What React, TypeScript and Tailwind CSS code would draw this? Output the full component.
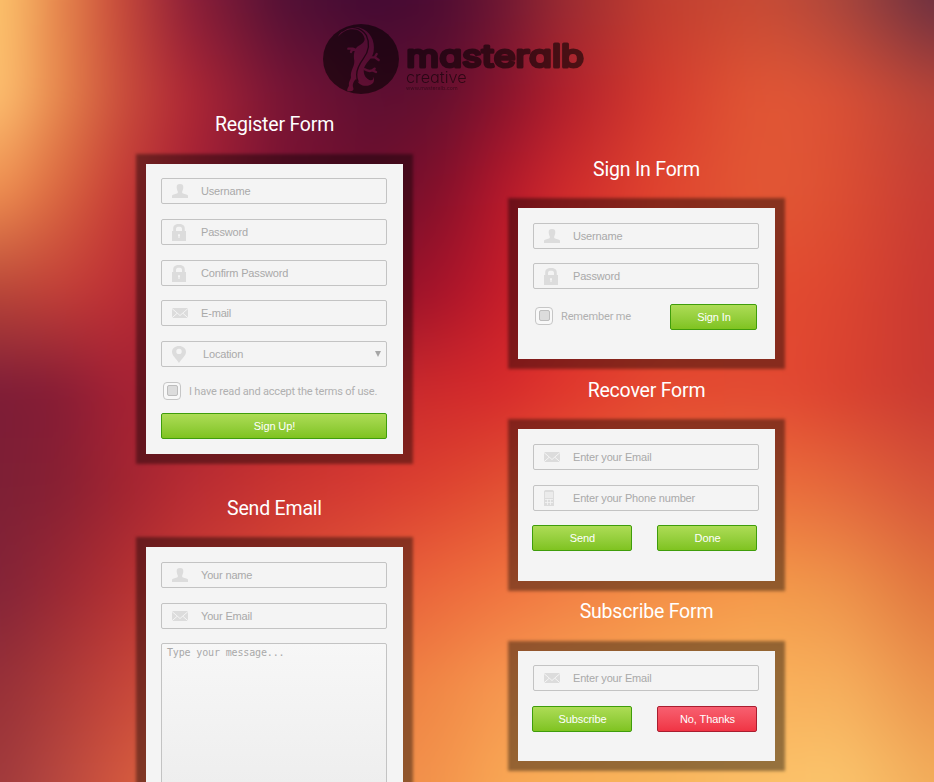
import type { ReactNode } from "react";

/* ---------- Backdrop: a colour mesh blended row by row, then softened ---------- */

const bleed = 60;

const meshX = [0, 60, 120, 187, 280, 374, 440, 500, 560, 654, 747, 790, 840, 934];

const meshRows: { y: number; colors: string[] }[] = [
  { y: 0, colors: ["#fdc46c", "#e6864c", "#c84a3a", "#8e1f38", "#531135", "#420a33", "#4d0c33", "#6c1733", "#972a32", "#c03e30", "#c84a34", "#c04a38", "#aa463c", "#6b3040"] },
  { y: 98, colors: ["#fdc070", "#e6864c", "#cb4f3c", "#b02835", "#7a1535", "#5e0f32", "#66102f", "#88132d", "#b01e2c", "#d43a2e", "#e05434", "#e05636", "#da5036", "#b84438"] },
  { y: 195, colors: ["#ee8e50", "#d96640", "#c63c36", "#a82136", "#7a1232", "#6e0f2d", "#86102b", "#b3182b", "#cf2a2c", "#e0442f", "#e25634", "#e15634", "#dc4e33", "#c63c34"] },
  { y: 293, colors: ["#b84538", "#c23f38", "#bd2f35", "#a01f35", "#86152f", "#90122b", "#a8142a", "#c41c2a", "#d72c2c", "#e0402e", "#e24a30", "#e24a30", "#dc4630", "#c83832"] },
  { y: 391, colors: ["#7d1c37", "#861c35", "#a42134", "#a82433", "#b8262e", "#c52a2e", "#cf2a2c", "#d62b2c", "#e0362d", "#e44830", "#e24a32", "#e24832", "#da4230", "#c83a32"] },
  { y: 489, colors: ["#7d2035", "#882033", "#a02431", "#b82c33", "#cb3531", "#d83c32", "#de4430", "#e25033", "#e65c38", "#ea6a39", "#ec703c", "#ea6e3c", "#e4683c", "#d6543a"] },
  { y: 586, colors: ["#832438", "#9a2834", "#b23033", "#c83c34", "#d84c35", "#e45c3a", "#ec683c", "#f0733f", "#f27e44", "#f48e46", "#f4984a", "#f2984a", "#ee924a", "#e0743e"] },
  { y: 684, colors: ["#963038", "#ac3a38", "#c4443a", "#d3543a", "#e26a3e", "#ee7c42", "#f18846", "#f69650", "#f79e52", "#f8a856", "#f9b05a", "#f9b05b", "#f6ae5c", "#ea924c"] },
  { y: 782, colors: ["#a03a3c", "#b84840", "#d2573e", "#de6c42", "#e87e46", "#ef8c4a", "#f3944c", "#f8a654", "#f8ae58", "#f8b55c", "#fabd66", "#fbc26a", "#fac46c", "#f2ac5a"] },
];

function Backdrop() {
  return (
    <div className="absolute -inset-[60px] -z-10 blur-[18px]">
      {meshRows.map((row, i) => {
        const stops = row.colors.map((c, j) => `${c} ${meshX[j] + bleed}px`).join(", ");
        const fade =
          i === 0
            ? undefined
            : `linear-gradient(to bottom, transparent ${meshRows[i - 1].y + bleed}px, black ${row.y + bleed}px)`;
        return (
          <div
            key={row.y}
            className="absolute inset-0"
            style={{ backgroundImage: `linear-gradient(to right, ${stops})`, maskImage: fade }}
          />
        );
      })}
    </div>
  );
}

/* ---------- Logo ---------- */

function Logo() {
  return (
    <svg viewBox="0 0 870 285" className="ml-[310px] block h-[95px] w-[290px]" fill="#000" opacity="0.56">
      <mask id="gecko">
        <rect width="870" height="285" fill="#fff" />
        <path
          d="M84 80C94 58 126 46 150 53C180 62 196 92 191 124C188 146 170 154 163 172C158 188 164 204 178 210C188 214 192 206 188 200C196 208 192 220 180 225C162 232 144 224 139 206C130 214 126 224 130 234C132 242 126 245 112 243C110 236 116 232 117 226C115 216 122 210 123 202C120 182 134 170 133 152C130 136 132 120 142 110C154 102 164 98 164 86C160 68 144 58 128 58C110 58 98 66 84 80Z"
          fill="#000"
        />
        <g fill="none" stroke="#000" strokeLinecap="round" strokeLinejoin="round">
          <path d="M142 122L128 116L115 116M127 117L123 126" strokeWidth="7" />
          <path d="M182 142L194 142L206 150M194 142L200 132" strokeWidth="7" />
          <path d="M164 178C174 184 186 184 194 176M188 181L198 186" strokeWidth="7" />
        </g>
        <path
          d="M98 63C122 44 154 52 169 76C182 104 174 128 160 146C147 164 140 178 140 194C140 204 142 210 144 214"
          fill="none"
          stroke="#fff"
          strokeWidth="4"
          strokeLinecap="round"
        />
      </mask>
      <ellipse cx="153" cy="147" rx="114" ry="105" mask="url(#gecko)" />
      <text
        x="289"
        y="172"
        textLength="533"
        lengthAdjust="spacingAndGlyphs"
        stroke="#000"
        strokeWidth="9"
        strokeLinejoin="round"
        strokeLinecap="round"
        className="font-['Inter',sans-serif] text-[94px] font-normal [font-feature-settings:'cv11','ss01']"
      >
        masteralb
      </text>
      <text
        x="288"
        y="219"
        textLength="182"
        lengthAdjust="spacingAndGlyphs"
        className="font-['Inter',sans-serif] text-[46px] font-light [font-feature-settings:'cv11']"
      >
        creative
      </text>
      <text x="288" y="241" textLength="155" lengthAdjust="spacingAndGlyphs" opacity=".75" className="font-['Inter',sans-serif] text-[15px]">
        www.masteralb.com
      </text>
    </svg>
  );
}

/* ---------- Field icons ---------- */

function UserIcon() {
  return (
    <svg viewBox="0 0 16 14" className="h-[14px] w-4" fill="#dcdcdc">
      <path d="M8 0C10.400 0 11.400 1 11.300 3.400C11.200 5.600 10.400 6.600 10.200 7.600V9C12 10 15.200 10.200 16 11.600V14H0V11.600C.8 10.200 4 10 5.800 9V7.600C5.600 6.600 4.800 5.600 4.700 3.400C4.600 1 5.600 0 8 0Z" />
    </svg>
  );
}

function LockIcon() {
  return (
    <svg viewBox="0 0 14 17" className="h-[17px] w-[14px]" fill="#dcdcdc">
      <path
        fillRule="evenodd"
        d="M0 7H1.200V4.600C1.200 1.600 3 0 7 0S12.800 1.600 12.800 4.600V7H14V17H0ZM4 7H10V5C10 3.400 9 2.800 7 2.800S4 3.400 4 5ZM6 10.200V11.800L6.400 12.200V14H7.600V12.200L8 11.800V10.200Z"
      />
    </svg>
  );
}

function MailIcon() {
  return (
    <svg viewBox="0 0 16 10" className="h-[10px] w-4">
      <rect width="16" height="10" fill="#dcdcdc" />
      <path d="M0 .5L8 7.500L16 .5M0 9.800L5 5.400M16 9.800L11 5.400" fill="none" stroke="#f4f4f4" strokeWidth="1" />
    </svg>
  );
}

function PinIcon() {
  return (
    <svg viewBox="0 0 14 17" className="h-[17px] w-[14px]" fill="#dcdcdc">
      <path
        fillRule="evenodd"
        d="M7 0C11 0 14 2.400 14 6C14 9.500 9.500 13 7 17C4.500 13 0 9.500 0 6C0 2.400 3 0 7 0ZM7 2.700A2.700 2.700 0 1 0 7 8.100A2.700 2.700 0 1 0 7 2.700Z"
      />
    </svg>
  );
}

function PhoneIcon() {
  return (
    <svg viewBox="0 0 10 16" className="h-4 w-[10px]">
      <path d="M1.500 0H8.500L10 1V16H0V1Z" fill="#dcdcdc" />
      <rect x="1" y="2" width="8" height="6" fill="#ebebeb" />
      <path d="M1 9.500H9M1 12.500H9M3.500 9V15M6.500 9V15" stroke="#f4f4f4" strokeWidth=".8" />
    </svg>
  );
}

/* ---------- Form parts ---------- */

function Field({ icon, text, className = "", children }: { icon: ReactNode; text: string; className?: string; children?: ReactNode }) {
  return (
    <div className={`flex h-[26px] w-[226px] items-center rounded-[2px] border border-[#c3c3c3] pl-[10px] ${className}`}>
      <span className="flex w-[29px] items-center">{icon}</span>
      <span className="flex-1 text-[11px] leading-none tracking-[-0.17px] text-[#a9a9a9]">{text}</span>
      {children}
    </div>
  );
}

function Button({ text, tone = "green", className = "" }: { text: string; tone?: "green" | "red"; className?: string }) {
  const look =
    tone === "green"
      ? "border-[#3f9d0b] from-[#addc55] to-[#7fc31f]"
      : "border-[#a91d2f] from-[#f75f70] to-[#f03344]";
  return (
    <button
      className={`flex h-[26px] items-center justify-center rounded-[2px] border bg-linear-to-b pl-px text-[11px] leading-none tracking-[-0.1px] text-white ${look} ${className}`}
    >
      {text}
    </button>
  );
}

function Check({ text, spacing }: { text: string; spacing: string }) {
  return (
    <label className="flex h-[18px] items-center pl-[2px]">
      <span className="flex h-[18px] w-[18px] items-start rounded-[4px] border border-[#c6c6c6] bg-[#f8f8f8] pt-[2px] pl-[3px]">
        <span className="h-[11px] w-[11px] rounded-[2px] border border-[#bdbdbd] bg-[#dcdcdc]" />
      </span>
      <span className={`ml-2 whitespace-nowrap font-['Roboto',sans-serif] text-[11px] leading-none text-[#b0b0b0] ${spacing}`}>{text}</span>
    </label>
  );
}

function Title({ text }: { text: string }) {
  return (
    <h2 className="h-[30px] pt-px text-center font-['Roboto',sans-serif] text-[19.5px] leading-[30px] tracking-[-0.2px] text-white">{text}</h2>
  );
}

function Card({ className = "", children }: { className?: string; children: ReactNode }) {
  return (
    <section className={`w-[257px] bg-[#f4f4f4] px-[15px] shadow-[0_0_3px_10px_rgba(0,0,0,0.4)] ${className}`}>{children}</section>
  );
}

export default function App() {
  return (
    <div className="relative isolate h-[782px] w-[934px] overflow-hidden pt-[10px] font-['Liberation_Sans',Arial,sans-serif]">
      <Backdrop />
      <Logo />
      <main className="flex gap-[115px] pl-[146px]">
        <div className="w-[257px] pt-1">
          <Title text="Register Form" />
          <Card className="mt-[25px] h-[290px] pt-[14px]">
            <Field icon={<UserIcon />} text="Username" />
            <Field icon={<LockIcon />} text="Password" className="mt-[15px]" />
            <Field icon={<LockIcon />} text="Confirm Password" className="mt-[15px]" />
            <Field icon={<MailIcon />} text="E-mail" className="mt-[14px]" />
            <Field icon={<PinIcon />} text="Location" className="mt-[15px] [&>span:nth-child(2)]:pl-[2px]">
              <span className="mr-[5px] h-0 w-0 border-x-[3px] border-t-[6px] border-x-transparent border-t-[#a6a6a6]" />
            </Field>
            <div className="mt-[15px]">
              <Check text="I have read and accept the terms of use." spacing="tracking-[-0.18px]" />
            </div>
            <Button text="Sign Up!" className="mt-[13px] w-[226px]" />
          </Card>

          <div className="mt-[39px]">
            <Title text="Send Email" />
          </div>
          <Card className="mt-6 h-[400px] pt-[15px]">
            <Field icon={<UserIcon />} text="Your name" />
            <Field icon={<MailIcon />} text="Your Email" className="mt-[15px]" />
            <div className="mt-[14px] h-[220px] w-[226px] rounded-[2px] border border-[#c3c3c3] bg-linear-to-b from-[#f7f7f7] to-[#e9e9e9] px-[5px] pt-[3px] font-['DejaVu_Sans_Mono',monospace] text-[10px] leading-[12px] tracking-[-0.15px] text-[#a9a9a9]">
              Type your message...
            </div>
          </Card>
        </div>

        <div className="w-[257px] pt-[49px]">
          <Title text="Sign In Form" />
          <Card className="mt-6 h-[151px] pt-[15px]">
            <Field icon={<UserIcon />} text="Username" />
            <Field icon={<LockIcon />} text="Password" className="mt-[14px]" />
            <div className="mt-[15px] flex items-center justify-between pr-[3px]">
              <div className="-mt-[2px]">
                <Check text="Remember me" spacing="tracking-[-0.15px]" />
              </div>
              <Button text="Sign In" className="w-[87px]" />
            </div>
          </Card>

          <div className="mt-4">
            <Title text="Recover Form" />
          </div>
          <Card className="mt-6 h-[152px] pt-[15px]">
            <Field icon={<MailIcon />} text="Enter your Email" />
            <Field icon={<PhoneIcon />} text="Enter your Phone number" className="mt-[15px]" />
            <div className="-ml-px mt-[14px] flex gap-[25px]">
              <Button text="Send" className="w-[100px]" />
              <Button text="Done" className="w-[100px]" />
            </div>
          </Card>

          <div className="mt-[15px]">
            <Title text="Subscribe Form" />
          </div>
          <Card className="mt-[25px] h-[110px] pt-[14px]">
            <Field icon={<MailIcon />} text="Enter your Email" />
            <div className="-ml-px mt-[15px] flex gap-[25px]">
              <Button text="Subscribe" className="w-[100px]" />
              <Button text="No, Thanks" tone="red" className="w-[100px]" />
            </div>
          </Card>
        </div>
      </main>
    </div>
  );
}
